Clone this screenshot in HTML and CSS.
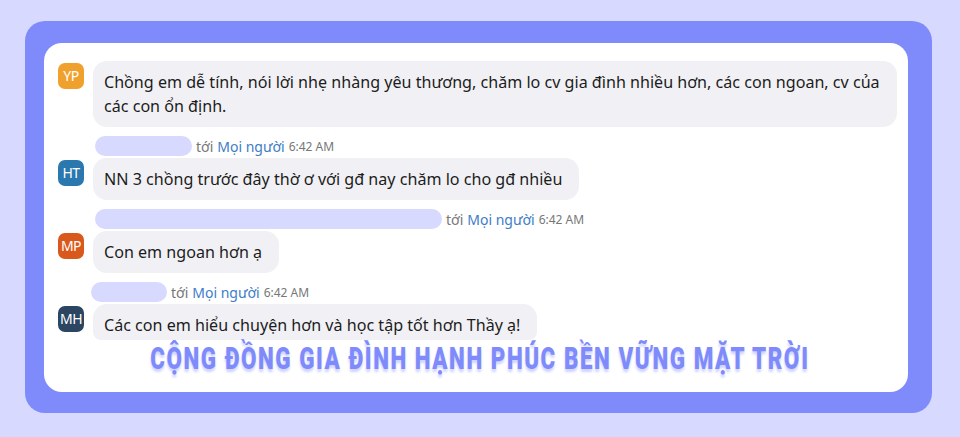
FILE: index.html
```html
<!DOCTYPE html>
<html lang="vi">
<head>
<meta charset="UTF-8" />
<meta name="viewport" content="width=device-width, initial-scale=1" />
<title>Cộng đồng gia đình hạnh phúc</title>
<link rel="stylesheet" href="styles.css">
</head>
<body>
  <div class="frame">
    <div class="card">
      <div class="msg">
        <div class="avatar yp">YP</div>
        <div class="bubble">Chồng em dễ tính, nói lời nhẹ nhàng yêu thương, chăm lo cv gia đình nhiều hơn, các con ngoan, cv của các con ổn định.</div>
      </div>

      <div class="meta">
        <span class="blur" style="width:97px"></span>
        <span class="to">tới</span> <span class="who">Mọi người</span> <span class="time">6:42 AM</span>
      </div>
      <div class="msg">
        <div class="avatar ht">HT</div>
        <div class="bubble">NN 3 chồng trước đây thờ ơ với gđ nay chăm lo cho gđ nhiều</div>
      </div>

      <div class="meta">
        <span class="blur" style="width:347px"></span>
        <span class="to">tới</span> <span class="who">Mọi người</span> <span class="time">6:42 AM</span>
      </div>
      <div class="msg">
        <div class="avatar mp">MP</div>
        <div class="bubble">Con em ngoan hơn ạ</div>
      </div>

      <div class="meta shift">
        <span class="blur" style="width:76px"></span>
        <span class="to">tới</span> <span class="who">Mọi người</span> <span class="time">6:42 AM</span>
      </div>
      <div class="msg">
        <div class="avatar mh">MH</div>
        <div class="bubble cut">Các con em hiểu chuyện hơn và học tập tốt hơn Thầy ạ!</div>
      </div>

      <h1 class="title"><span>CỘNG ĐỒNG GIA ĐÌNH HẠNH PHÚC BỀN VỮNG MẶT TRỜI</span></h1>
    </div>
  </div>
</body>
</html>
```

FILE: styles.css
```css
* {
  box-sizing: border-box;
}
body {
  margin: 0;
  background: #d8d9fe;
  font-family: 'Noto Sans', 'Open Sans', sans-serif;
  color: #1c1c1c;
}
.frame {
  margin: 21px 28px 0 25px;
  height: 392px;
  background: #7f8bfb;
  border-radius: 20px;
  padding: 22px 24px 21px 19px;
}
.card {
  background: #fff;
  border-radius: 18px;
  height: 100%;
  padding: 18px 10px 0 14px;
  display: flex;
  flex-direction: column;
}
.msg {
  display: flex;
  align-items: flex-start;
  gap: 9px;
}
.avatar {
  flex: 0 0 26px;
  height: 26px;
  margin-top: 2px;
  border-radius: 7px;
  color: #fff;
  font-size: 14px;
  line-height: 26px;
  text-align: center;
  letter-spacing: -0.5px;
}
.yp { background: #f0a02c; }
.ht { background: #2a78ae; }
.mp { background: #d9581c; }
.mh { background: #2c4561; }
.bubble {
  background: #f1f1f5;
  border-radius: 14px;
  padding: 9px 17px 9px 11px;
  font-size: 16.1px;
  line-height: 24px;
  max-width: 804px;
}
.bubble.cut {
  padding-bottom: 3px;
  border-radius: 14px 14px 8px 8px;
}
.meta {
  display: flex;
  align-items: center;
  gap: 4px;
  margin: 9px 0 2px 37px;
  height: 20px;
  font-size: 14px;
  color: #777;
}
.meta.shift {
  margin-left: 33px;
}
.blur {
  height: 20px;
  border-radius: 10px;
  background: #d8d9fe;
}
.who {
  color: #3d7dc8;
}
.time {
  font-size: 12px;
  color: #777;
}
.title {
  margin: -2px 0 0 0;
  display: flex;
  justify-content: center;
  padding-left: 4px;
}
.title span {
  flex-shrink: 0;
  white-space: nowrap;
  font-family: Roboto, 'DejaVu Sans Condensed', sans-serif;
  font-weight: 900;
  font-size: 32px;
  line-height: 40px;
  letter-spacing: 2.2px;
  color: #7f8bfb;
  text-shadow: 0 3px 3px #cfd3ff;
  transform: scaleX(0.7);
}
```
